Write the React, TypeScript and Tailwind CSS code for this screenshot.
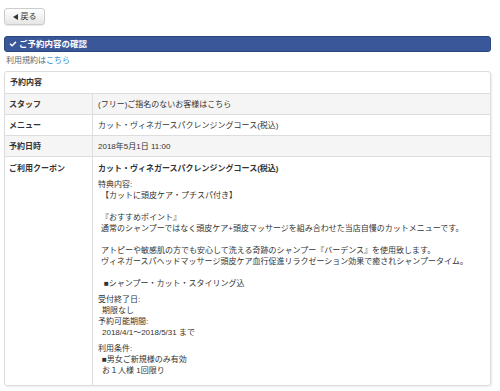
import React from 'react';

const rows = [
  { label: 'スタッフ', value: '(フリー)ご指名のないお客様はこちら', striped: true },
  { label: 'メニュー', value: 'カット・ヴィネガースパクレンジングコース(税込)', striped: false },
  { label: '予約日時', value: '2018年5月1日 11:00', striped: true },
];

const CheckIcon = () => (
  <svg className="h-[8px] w-[8px]" viewBox="0 0 16 16" fill="white">
    <path d="M1 8.5 L3.2 6.3 L6.2 9.3 L12.8 2.7 L15 4.9 L6.2 13.7 Z" />
  </svg>
);

const BackTriangle = () => (
  <svg className="h-[6px] w-[5px]" viewBox="0 0 5 6" fill="#333">
    <path d="M5 0 L5 6 L0 3 Z" />
  </svg>
);

const CouponDetail = () => (
  <div>
    <div className="font-bold">カット・ヴィネガースパクレンジングコース(税込)</div>
    <div className="mt-[5px]">
      <div>特典内容:</div>
      <div className="pl-[3px]">
        <div>【カットに頭皮ケア・プチスパ付き】</div>
        <div className="h-[11px]" />
        <div>『おすすめポイント』</div>
        <div>通常のシャンプーではなく頭皮ケア+頭皮マッサージを組み合わせた当店自慢のカットメニューです。</div>
        <div className="h-[11px]" />
        <div>アトピーや敏感肌の方でも安心して洗える奇跡のシャンプー『バーデンス』を使用致します。</div>
        <div>ヴィネガースパヘッドマッサージ頭皮ケア血行促進リラクゼーション効果で癒されシャンプータイム。</div>
        <div className="h-[11px]" />
        <div className="pl-[3px]">■シャンプー・カット・スタイリング込</div>
      </div>
    </div>
    <div className="mt-[5px]">
      <div>受付終了日:</div>
      <div className="pl-[4px]">期限なし</div>
      <div>予約可能期間:</div>
      <div className="pl-[4px]">2018/4/1～2018/5/31 まで</div>
    </div>
    <div className="mt-[5px]">
      <div>利用条件:</div>
      <div className="pl-[4px]">■男女ご新規様のみ有効</div>
      <div className="pl-[4px]">お１人様 1回限り</div>
    </div>
  </div>
);

export default function App() {
  return (
    <div className="min-h-[391px] bg-white pl-[4px] pt-[8px] font-[family-name:'Liberation_Sans','Noto_Sans_CJK_JP',sans-serif] text-[8px] leading-[11px] text-[#333]">
      <button className="flex h-[17px] w-[41px] items-center justify-center gap-[3px] rounded-[3px] border border-[#ccc] bg-gradient-to-b from-white to-[#e6e6e6] shadow-[0_1px_1px_rgba(0,0,0,0.08)]">
        <BackTriangle />
        <span>戻る</span>
      </button>

      <div className="mt-[11px] flex h-[16px] w-[487px] items-center gap-[2px] rounded-[3px] border border-[#2c4680] bg-[#3a5899] px-[4px] text-[8.5px] font-bold text-white">
        <CheckIcon />
        <span>ご予約内容の確認</span>
      </div>

      <div className="mt-[3px] pl-[2px] text-[#666]">
        利用規約は<span className="text-[#2b8ad6]">こちら</span>
      </div>

      <div className="mt-[5px] w-[487px] overflow-hidden rounded-[3px] border border-[#ddd] shadow-[1px_1px_2px_rgba(0,0,0,0.08)]">
        <div className="flex h-[21px] items-center px-[5px] font-bold">予約内容</div>
        {rows.map((row) => (
          <div
            key={row.label}
            className={`flex h-[21px] border-t border-[#ddd] ${row.striped ? 'bg-[#f5f5f5]' : 'bg-white'}`}
          >
            <div className="flex w-[88px] shrink-0 items-center border-r border-[#ddd] px-[4px] font-bold">{row.label}</div>
            <div className="flex items-center px-[5px]">{row.value}</div>
          </div>
        ))}
        <div className="flex border-t border-[#ddd]">
          <div className="w-[88px] shrink-0 border-r border-[#ddd] px-[4px] pt-[6px] font-bold">ご利用クーポン</div>
          <div className="px-[5px] pb-[9px] pt-[6px]">
            <CouponDetail />
          </div>
        </div>
      </div>
    </div>
  );
}
